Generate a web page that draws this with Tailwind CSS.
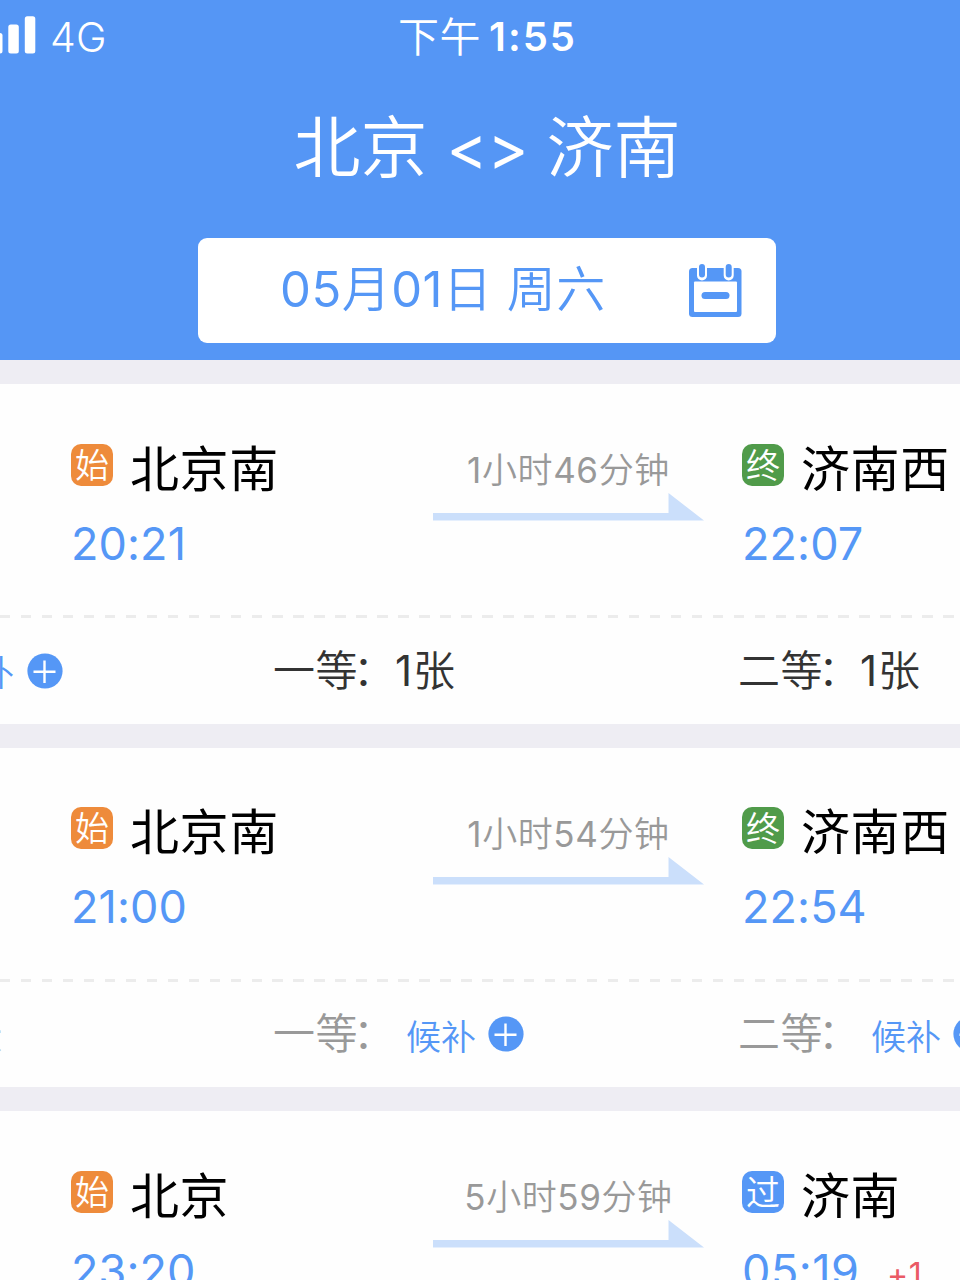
<!DOCTYPE html>
<html lang="zh-CN">
  <head>
    <meta charset="UTF-8" />
    <meta name="viewport" content="width=device-width, initial-scale=1.0" />
    <title>北京 - 济南</title>
    <script src="https://cdn.jsdelivr.net/npm/@tailwindcss/browser@4"></script>
  </head>
  <body class="h-[1280px] w-[960px] overflow-hidden bg-[#eeedf3] font-['Inter','Noto_Sans_CJK_SC_DemiLight','Noto_Sans_CJK_SC',sans-serif] font-normal whitespace-nowrap">
    <!-- shared icons -->
    <svg class="hidden">
      <symbol id="arrow" viewBox="0 0 271 28">
        <path d="M0 20H235.500V0L271 27.500H0z" fill="#cbdffb" />
      </symbol>
      <symbol id="plus" viewBox="0 0 36 36">
        <circle cx="18" cy="18" r="17.600" fill="#5597f6" />
        <path d="M6.500 18.800H28.500M17.500 7.500V30" stroke="#fff" stroke-width="2.400" fill="none" />
      </symbol>
    </svg>

    <header class="h-[360px] bg-[#5596f5] text-white">
      <!-- status bar -->
      <div class="grid h-[74px] grid-cols-[398px_1fr] items-center">
        <div class="flex items-center">
          <svg class="h-[74px] w-[36px]" viewBox="0 0 36 74" fill="#fff">
            <rect x="-8" y="33" width="10.500" height="20.500" rx="2.500" />
            <rect x="8.300" y="24.500" width="10.500" height="29" rx="2.500" />
            <rect x="24.800" y="16.300" width="10.500" height="37.200" rx="2.500" />
          </svg>
          <span class="ml-[14px] text-[41px] leading-[50px] font-[350] tracking-[0.3px]">4G</span>
        </div>
        <div class="flex items-center leading-[50px]">
          <span class="text-[41px] font-medium tracking-[0.5px]">下午</span>
          <span class="ml-[8px] text-[40px] font-semibold tracking-[2px]">1:55</span>
        </div>
      </div>

      <h1 class="flex h-[148px] items-center justify-center pl-[14px] text-[67px] leading-[80px]">
        <span>北京</span>
        <span class="mr-[18px] ml-[19px] text-[62px]">&lt;&gt;</span>
        <span>济南</span>
      </h1>

      <div class="mt-[15.500px] ml-[198px] flex h-[105px] w-[578px] items-center rounded-[9px] bg-white text-[#5597f6]">
        <span class="ml-[82px] w-[409px] text-[49px] leading-[60px] tracking-[0.5px]">05月01日 周六</span>
        <svg class="mt-[2px] h-[54px] w-[53px]" viewBox="0 0 53 54">
          <rect x="0" y="4" width="52.500" height="49" rx="3.500" fill="#5597f6" />
          <rect x="5" y="17.500" width="43" height="30.500" rx="1" fill="#fff" />
          <path d="M13 3V11.500M39.700 3V11.500" stroke="#fff" stroke-width="10" stroke-linecap="round" />
          <path d="M13 3V10.500M39.700 3V10.500" stroke="#5597f6" stroke-width="6" stroke-linecap="round" />
          <path d="M16 31.500H37" stroke="#5597f6" stroke-width="7" stroke-linecap="round" />
        </svg>
      </div>
    </header>

    <main class="flex flex-col gap-6 pt-6">
      <section class="h-[339.600px] shrink-0 overflow-hidden bg-[#fefefe]">
        <div class="grid h-[231px] grid-cols-[362px_309px_1fr] pt-[59.500px] pl-[71px]">
          <div>
            <div class="flex">
              <span class="size-[42px] rounded-[10px] bg-[#ee8b3b] text-center text-[34px] leading-[43px] text-white">始</span>
              <span class="ml-[17px] font-['Inter','Noto_Sans_CJK_SC',sans-serif] text-[49px] leading-[51px] tracking-[0.6px] text-black">北京南</span>
            </div>
            <div class="mt-[24px] text-[45px] leading-[50px] tracking-[0.1px] text-[#5597f6]">20:21</div>
          </div>
          <div class="w-[271px] pt-[6.500px]">
            <div class="text-center text-[35px] leading-[40px] tracking-[0.6px] text-[#999]">1小时46分钟</div>
            <svg class="mt-[3px] h-[28px] w-[271px]"><use href="#arrow" /></svg>
          </div>
          <div>
            <div class="flex">
              <span class="size-[42px] rounded-[10px] bg-[#509b4a] text-center text-[34px] leading-[43px] text-white">终</span>
              <span class="ml-[17px] font-['Inter','Noto_Sans_CJK_SC',sans-serif] text-[49px] leading-[51px] tracking-[0.6px] text-black">济南西</span>
            </div>
            <div class="mt-[24px] text-[45px] leading-[50px] tracking-[0.1px] text-[#5597f6]">22:07</div>
          </div>
        </div>
        <div class="h-[3px] bg-[repeating-linear-gradient(90deg,#ececec_0_10.500px,transparent_10.500px_20.960px)]"></div>
        <div class="flex h-[105px] items-center text-[42px] leading-[50px] text-[#333]">
          <div class="flex w-[273px] shrink-0 items-center">
            <span class="-ml-[56px] pt-[5px] text-[35px] text-[#5597f6]">候补</span>
            <svg class="ml-[13px] size-[36px]"><use href="#plus" /></svg>
          </div>
          <div class="flex w-[465px] shrink-0">
            <span class="w-[122px] tracking-[0.5px]">一等<span class="-ml-[5px]">：</span></span>
            <span class="tracking-[0.8px]">1张</span>
          </div>
          <div class="flex w-[465px] shrink-0">
            <span class="w-[122px] tracking-[0.5px]">二等<span class="-ml-[5px]">：</span></span>
            <span class="tracking-[0.8px]">1张</span>
          </div>
        </div>
      </section>

      <section class="h-[339.600px] shrink-0 overflow-hidden bg-[#fefefe]">
        <div class="grid h-[231px] grid-cols-[362px_309px_1fr] pt-[59.500px] pl-[71px]">
          <div>
            <div class="flex">
              <span class="size-[42px] rounded-[10px] bg-[#ee8b3b] text-center text-[34px] leading-[43px] text-white">始</span>
              <span class="ml-[17px] font-['Inter','Noto_Sans_CJK_SC',sans-serif] text-[49px] leading-[51px] tracking-[0.6px] text-black">北京南</span>
            </div>
            <div class="mt-[24px] text-[45px] leading-[50px] tracking-[0.1px] text-[#5597f6]">21:00</div>
          </div>
          <div class="w-[271px] pt-[6.500px]">
            <div class="text-center text-[35px] leading-[40px] tracking-[0.6px] text-[#999]">1小时54分钟</div>
            <svg class="mt-[3px] h-[28px] w-[271px]"><use href="#arrow" /></svg>
          </div>
          <div>
            <div class="flex">
              <span class="size-[42px] rounded-[10px] bg-[#509b4a] text-center text-[34px] leading-[43px] text-white">终</span>
              <span class="ml-[17px] font-['Inter','Noto_Sans_CJK_SC',sans-serif] text-[49px] leading-[51px] tracking-[0.6px] text-black">济南西</span>
            </div>
            <div class="mt-[24px] text-[45px] leading-[50px] tracking-[0.1px] text-[#5597f6]">22:54</div>
          </div>
        </div>
        <div class="h-[3px] bg-[repeating-linear-gradient(90deg,#ececec_0_10.500px,transparent_10.500px_20.960px)]"></div>
        <div class="flex h-[105px] items-center text-[42px] leading-[50px] text-[#999]">
          <div class="w-[273px] shrink-0"><span class="-ml-[40px]">张</span></div>
          <div class="flex w-[465px] shrink-0 items-center">
            <span class="w-[133px] tracking-[0.5px]">一等<span class="-ml-[5px]">：</span></span>
            <span class="pt-[5px] text-[35px] text-[#5597f6]">候补</span>
            <svg class="ml-[12px] size-[36px]"><use href="#plus" /></svg>
          </div>
          <div class="flex w-[465px] shrink-0 items-center">
            <span class="w-[133px] tracking-[0.5px]">二等<span class="-ml-[5px]">：</span></span>
            <span class="pt-[5px] text-[35px] text-[#5597f6]">候补</span>
            <svg class="ml-[12px] size-[36px]"><use href="#plus" /></svg>
          </div>
        </div>
      </section>

      <section class="h-[339.600px] shrink-0 overflow-hidden bg-[#fefefe]">
        <div class="grid h-[231px] grid-cols-[362px_309px_1fr] pt-[59.500px] pl-[71px]">
          <div>
            <div class="flex">
              <span class="size-[42px] rounded-[10px] bg-[#ee8b3b] text-center text-[34px] leading-[43px] text-white">始</span>
              <span class="ml-[17px] font-['Inter','Noto_Sans_CJK_SC',sans-serif] text-[49px] leading-[51px] tracking-[0.6px] text-black">北京</span>
            </div>
            <div class="mt-[24px] text-[45px] leading-[50px] tracking-[0.1px] text-[#5597f6]">23:20</div>
          </div>
          <div class="w-[271px] pt-[6.500px]">
            <div class="text-center text-[35px] leading-[40px] tracking-[0.6px] text-[#999]">5小时59分钟</div>
            <svg class="mt-[3px] h-[28px] w-[271px]"><use href="#arrow" /></svg>
          </div>
          <div>
            <div class="flex">
              <span class="size-[42px] rounded-[10px] bg-[#5597f6] text-center text-[34px] leading-[43px] text-white">过</span>
              <span class="ml-[17px] font-['Inter','Noto_Sans_CJK_SC',sans-serif] text-[49px] leading-[51px] tracking-[0.6px] text-black">济南</span>
            </div>
            <div class="mt-[24px] flex text-[45px] leading-[50px] tracking-[0.5px] text-[#5597f6]">
              <span class="w-[145px]">05:19</span>
              <span class="text-[32px] leading-[58px] text-[#ea5a65]">+1</span>
            </div>
          </div>
        </div>
      </section>
    </main>
  </body>
</html>
